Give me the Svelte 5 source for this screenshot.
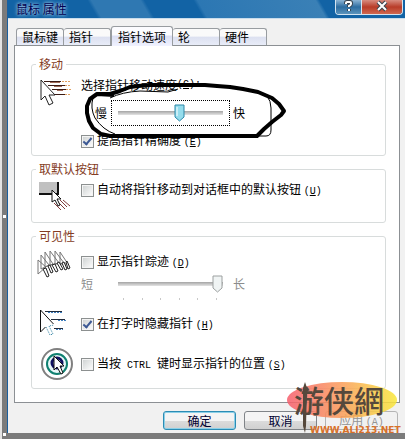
<script lang="ts">
  const tabs = ['鼠标键', '指针', '指针选项', '轮', '硬件'];

  let activeTab = $state(2);
  let speed = $state(60);
  let precision = $state(true);
  let snapTo = $state(false);
  let trails = $state(false);
  let trailLength = $state(100);
  let hideTyping = $state(true);
  let showLocation = $state(false);
</script>

{#snippet key(letter: string)}
  <span class="latin">(<u>{letter}</u>)</span>
{/snippet}

<main class="screen">
  <div class="window">
    <header class="titlebar">
      <h1>鼠标 属性</h1>
      <div class="caption">
        <button class="help" aria-label="帮助">
          <svg width="12" height="12" viewBox="0 0 12 12">
            <path d="M3 4V3q0-1 1-1h3q1 0 1 1v1q0 1-2 2v1M6 9v2" class="halo" />
            <path d="M3 4V3q0-1 1-1h3q1 0 1 1v1q0 1-2 2v1M6 9v2" class="stroke" />
          </svg>
        </button>
        <button class="close" aria-label="关闭">
          <svg width="12" height="12" viewBox="0 0 12 12">
            <path d="M2 2l8 8M10 2l-8 8" class="halo" />
            <path d="M2 2l8 8M10 2l-8 8" class="stroke" />
          </svg>
        </button>
      </div>
    </header>

    <div class="body">
      <div class="tabs" role="tablist">
        {#each tabs as tab, i}
          <button
            role="tab"
            class="tab"
            class:active={activeTab === i}
            aria-selected={activeTab === i}
            onclick={() => (activeTab = i)}
          >{tab}</button>
        {/each}
      </div>

      <section class="panel">
        <fieldset>
          <legend>移动</legend>
          <div class="group motion">
            <svg class="icon" width="32" height="32" viewBox="0 0 32 32">
              <path d="M4 2.500h17M8 6.500h17M12 10.500h14M14 15.500h11" stroke="#3a1a14" stroke-width="1" />
              <path d="M10 3.500h10M14 7.500h8M17 11.500h6" stroke="#a06a58" stroke-width="1" />
              <path d="M22 2.500h8M25 6.500h5M26 10.500h5M25 15.500h5" stroke="#e0a060" stroke-width="1" stroke-dasharray="2 1" />
              <path d="M1 1v20l4-4 4 9 4-2-4-8h6z" fill="#fff" stroke="#222" stroke-width="1" />
            </svg>
            <div class="controls">
              <label class="row" for="speed">选择指针移动速度<span class="latin">(<u>C</u>):</span></label>
              <div class="row slider">
                <span class="low">慢</span>
                <span class="focus"><input id="speed" type="range" bind:value={speed} /></span>
                <span class="high">快</span>
              </div>
              <label class="row check">
                <input type="checkbox" bind:checked={precision} />
                <span>提高指针精确度 {@render key('E')}</span>
              </label>
            </div>
          </div>
        </fieldset>

        <fieldset>
          <legend>取默认按钮</legend>
          <div class="group snap">
            <svg class="icon" width="32" height="32" viewBox="0 0 32 32">
              <path d="M-1 6h19v12H-1z" fill="#c0c0c0" />
              <path d="M-1 18h19V6" fill="none" stroke="#111" stroke-width="2" />
              <path d="M14 27l7 7M18 26l7 7M20 24l7 7M23 24l7 6" stroke="#843c3c" stroke-width="1" />
              <path d="M12 14v12l3-2 3 6 2-1-3-6h4z" fill="#fff" stroke="#111" />
            </svg>
            <div class="controls">
              <label class="row check">
                <input type="checkbox" bind:checked={snapTo} />
                <span>自动将指针移动到对话框中的默认按钮 {@render key('U')}</span>
              </label>
            </div>
          </div>
        </fieldset>

        <fieldset>
          <legend>可见性</legend>
          <div class="group trails">
            <svg class="icon" width="32" height="32" viewBox="0 0 32 32">
              <g fill="#fff" stroke="#777">
                <path d="M20 1v12l8 0zM15 0v13l9-1zM10 0v14l9-2zM5 1v15l8-3zM1 4v14l8-4zM-2 9v14l8-7z" />
              </g>
              <g fill="#fff" stroke="#222">
                <path d="M3 18l4 8 2-1-3-8zM8 15l3 7 2-1-3-7zM12 14l4 7 2-1-3-7zM17 12l4 7 2-1-4-7zM22 12l3 7 2-1-3-7zM26 11l2 7 2-1-3-7z" />
              </g>
            </svg>
            <div class="controls">
              <label class="row check">
                <input type="checkbox" bind:checked={trails} />
                <span>显示指针踪迹 {@render key('D')}</span>
              </label>
              <div class="row slider muted">
                <span class="low">短</span>
                <span class="focus"><input type="range" aria-label="指针踪迹长度" disabled={!trails} bind:value={trailLength} /></span>
                <span class="high">长</span>
              </div>
              <div class="ticks">
                {#each { length: 6 } as _}
                  <i></i>
                {/each}
              </div>
            </div>
          </div>

          <div class="group typing">
            <svg class="icon" width="32" height="32" viewBox="0 0 32 32">
              <path d="M5 3.500h17M11 11.500h14M14 20.500h9" stroke="#222c3c" stroke-width="1" />
              <path d="M8 4.500h14M18 12.500h9M16 21.500h7" stroke="#4080c0" stroke-dasharray="2 1" />
              <path d="M.5 2v22l5-5M.5 2l13 14" fill="none" stroke="#111" />
              <path d="M6 19l4 8 3-1-4-8 5-1" fill="none" stroke="#3484a4" stroke-dasharray="1 1" stroke-width="1" />
            </svg>
            <div class="controls">
              <label class="row check">
                <input type="checkbox" bind:checked={hideTyping} />
                <span>在打字时隐藏指针 {@render key('H')}</span>
              </label>
            </div>
          </div>

          <div class="group locate">
            <svg class="icon" width="32" height="32" viewBox="0 0 32 32">
              <circle cx="17" cy="16" r="15" fill="#fff" stroke="#808080" stroke-width="2" />
              <circle cx="17" cy="16" r="10" fill="#e8f8f8" stroke="#108070" stroke-width="2" />
              <circle cx="17" cy="15" r="5" fill="none" stroke="#101060" stroke-width="3" />
              <path d="M14 8v14l3-3 4 7 2-1-3-7h4z" fill="#fff" stroke="#111" />
            </svg>
            <div class="controls">
              <label class="row check">
                <input type="checkbox" bind:checked={showLocation} />
                <span>当按<span class="latin">{' CTRL '}</span>键时显示指针的位置 {@render key('S')}</span>
              </label>
            </div>
          </div>
        </fieldset>
      </section>

      <footer>
        <button class="push default">确定</button>
        <button class="push">取消</button>
        <button class="push" disabled>应用 {@render key('A')}</button>
      </footer>
    </div>
  </div>

  <span class="handle middle"></span>
  <span class="handle bottom"></span>

  <!-- pen stroke round the speed slider -->
  <svg class="scribble" width="210" height="64" viewBox="80 80 210 64" fill="none" stroke="#000">
    <path d="M97 94L110 94L120 91L130 87L138 86L150 85H205L217 86L230 87L243 89L258 92L272 98L279 104L284 111L281 115L272 122L264 129L257 136H110L101 134L93 128L89 121L87 113L87 106L90 99L97 94L114 95" stroke-width="4" stroke-linejoin="round" />
    <path d="M267 96q4 5 4 12v22q0 6-5 6h-8M93 98q-3 10 2 20q8 12 20 16M110 98q12-6 30-7l28 1l10-3" stroke-width="1" />
  </svg>

  <svg class="watermark" width="120" height="56" viewBox="286 380 120 56" role="img" aria-label="游侠網">
    <defs>
      <linearGradient id="flame">
        <stop offset="0" stop-color="#f65c6c" />
        <stop offset="0.5" stop-color="#fa9c58" />
        <stop offset="1" stop-color="#f8e838" />
      </linearGradient>
    </defs>
    <ellipse cx="343" cy="400" rx="55" ry="18" fill="url(#flame)" opacity="0.85" />
    <text x="295" y="412" class="brand">游侠網</text>
    <path d="M306 382l2 6-1 38-1 7-2-7 0-38z" fill="#55483c" />
    <text x="311" y="433" class="site">WWW.ALI213.NET</text>
  </svg>
</main>

<style>
  :global(body) {
    margin: 0;
    background: #7b7b7b;
  }

  .screen {
    position: relative;
    padding: 0 0 6px 7px;
    overflow: hidden;
    background: linear-gradient(to right, #e4e4e4 2px, #7b7b7b 2px);
    font-family: "Noto Sans CJK SC", sans-serif;
    font-size: 12px;
    line-height: 14px;
    color: #000;
  }

  button,
  input {
    margin: 0;
    font: inherit;
    color: inherit;
  }

  .window {
    border-left: 1px solid #1a5f9e;
    background: #f1f1f1;
  }

  .titlebar {
    display: flex;
    justify-content: space-between;
    height: 18px;
    border-bottom: 1px solid #c8dcec;
    background: linear-gradient(60deg, #1263a5 22%, #2f78b2 23%, #2f78b2 35%, #1263a5 36%, #1263a5 48%, #2c77b3 49%, #3a80b6 78%, #1263a5 79%);
  }

  h1 {
    margin: 0;
    padding: 2px 8px;
    font-size: 12px;
    font-weight: normal;
    line-height: 14px;
    color: #000050;
    text-shadow: 0 0 3px #a8cce8, 0 0 4px #a8cce8;
  }

  .caption {
    display: flex;
    height: 14px;
    margin-right: 2px;
    border: 1px solid #d4e4f0;
    border-top: 0;
    border-radius: 0 0 4px 4px;
    overflow: hidden;
  }

  .caption button {
    display: flex;
    align-items: center;
    justify-content: center;
    padding: 0 0 3px;
    border: 0;
  }

  .caption .help {
    width: 26px;
    border-right: 1px solid #d4e4f0;
    background: linear-gradient(#8cb4d4, #2c6ca0 50%, #5c94bc);
  }

  .close {
    width: 40px;
    background: linear-gradient(#d88c80, #b83c28 50%, #d06850);
  }

  .halo {
    fill: none;
    stroke: #384450;
    stroke-width: 4;
  }

  .stroke {
    fill: none;
    stroke: #fff;
    stroke-width: 2;
  }

  .body {
    padding: 6px 5px 3px 6px;
  }

  .tabs {
    display: flex;
    align-items: flex-end;
    height: 20px;
    padding-left: 2px;
  }

  .tab {
    min-width: 47px;
    height: 17px;
    padding: 0 5px;
    border: 1px solid #989ca0;
    border-bottom: 0;
    border-left-width: 0;
    border-radius: 3px 3px 0 0;
    background: linear-gradient(#fafafa 45%, #dce0f0 50%, #e8ecf8);
    line-height: 16px;
    text-align: left;
  }

  .tab:first-child {
    border-left-width: 1px;
  }

  .tab.active {
    position: relative;
    height: 20px;
    margin-bottom: -1px;
    padding: 0 6px;
    border-left-width: 1px;
    background: linear-gradient(#fcfcff 40%, #dce0f4 50%, #f0f2ff);
  }

  .panel {
    display: flex;
    flex-direction: column;
    gap: 6px;
    padding: 11px 13px 13px 16px;
    border: 1px solid #8c9094;
    background: #fff;
  }

  fieldset {
    min-width: 0;
    margin: 0;
    padding: 0;
    border: 1px solid #d8dcdc;
    border-radius: 3px;
  }

  legend {
    margin-left: 4px;
    padding: 0 3px;
    line-height: 14px;
    color: #843c24;
  }

  .group {
    display: grid;
    grid-template-columns: 49px 1fr;
  }

  .icon {
    margin-left: 8px;
    overflow: visible;
  }

  .row {
    display: flex;
    align-items: center;
    height: 28px;
    white-space: nowrap;
  }

  .motion .icon {
    margin-top: 8px;
  }

  .snap {
    padding-bottom: 14px;
  }

  .trails {
    padding-top: 8px;
  }

  .trails .row {
    height: 22px;
  }

  .typing,
  .locate {
    align-items: center;
    height: 40px;
  }

  .locate {
    padding-bottom: 4px;
  }

  .check {
    gap: 3px;
  }

  .latin {
    font-family: "Liberation Mono", monospace;
    font-size: 10px;
    white-space: pre;
  }

  .check input {
    appearance: none;
    display: grid;
    place-items: center;
    width: 13px;
    height: 13px;
    border: 1px solid #8c9090;
    background: linear-gradient(135deg, #ccd0d0, #fff);
    box-shadow: inset 0 0 0 1px #f4f4f4;
  }

  .check input:checked::before {
    content: '';
    width: 3px;
    height: 7px;
    margin-bottom: 2px;
    border: solid #3c5894;
    border-width: 0 2px 2px 0;
    transform: rotate(40deg);
  }

  .slider .low {
    width: 30px;
    box-sizing: border-box;
  }

  .motion .low {
    padding-left: 14px;
  }

  .slider .high {
    padding-left: 3px;
  }

  .focus {
    display: flex;
    align-items: center;
    width: 119px;
    height: 26px;
    padding: 0 6px;
    box-sizing: border-box;
    border: 1px dotted #000;
  }

  .slider.muted .focus {
    height: 22px;
    border-color: transparent;
  }

  .muted {
    color: #8c8c8c;
  }

  .slider input {
    appearance: none;
    width: 100%;
    height: 20px;
    background: linear-gradient(#a4a4a4, #e4e4e4) center / 100% 4px no-repeat;
  }

  .slider input::-webkit-slider-thumb {
    appearance: none;
    width: 11px;
    height: 18px;
    background: url("data:image/svg+xml,%3Csvg xmlns='http://www.w3.org/2000/svg' width='11' height='18'%3E%3Cpath d='M1 1h9v12l-4.500 4L1 13z' fill='%2394dcec' stroke='%232c88a8'/%3E%3Cpath d='M3 3v9' fill='none' stroke='white'/%3E%3C/svg%3E") no-repeat;
  }

  .slider.muted input::-webkit-slider-thumb {
    background: url("data:image/svg+xml,%3Csvg xmlns='http://www.w3.org/2000/svg' width='11' height='18'%3E%3Cpath d='M1 1h9v12l-4.500 4L1 13z' fill='%23f0f4f4' stroke='%239ca0a0'/%3E%3C/svg%3E") no-repeat;
  }

  .ticks {
    display: flex;
    justify-content: space-between;
    width: 94px;
    height: 6px;
    padding: 3px 0 0 42px;
  }

  .ticks i {
    width: 1px;
    height: 2px;
    background: #c8c8c8;
  }

  footer {
    display: flex;
    justify-content: flex-end;
    gap: 8px;
    padding: 8px 2px 0 0;
  }

  .push {
    width: 73px;
    height: 19px;
    padding: 0;
    border: 1px solid #808488;
    border-radius: 3px;
    background: linear-gradient(#f4f4f4 50%, #dcdcdc 50%, #d0d0d0);
    line-height: 16px;
    color: #000030;
  }

  .push.default {
    border-color: #2c8cb4;
    box-shadow: inset 0 0 0 1px #8cd0e8;
  }

  .push:disabled {
    border-color: #b4b4b4;
    background: #f1f1f1;
    color: #949494;
  }

  .handle {
    position: absolute;
    left: 3px;
    width: 3px;
    height: 3px;
    background: #fff;
  }

  .handle.middle {
    top: 215px;
  }

  .handle.bottom {
    bottom: 3px;
  }

  .scribble {
    position: absolute;
    top: 80px;
    left: 80px;
    pointer-events: none;
  }

  .watermark {
    position: absolute;
    right: 0;
    bottom: 3px;
    overflow: visible;
    pointer-events: none;
  }

  .brand {
    font-size: 30px;
    font-weight: 500;
    fill: #55483c;
  }

  .site {
    font-family: "DejaVu Sans", sans-serif;
    font-size: 9px;
    font-weight: bold;
    fill: #d87028;
  }
</style>
